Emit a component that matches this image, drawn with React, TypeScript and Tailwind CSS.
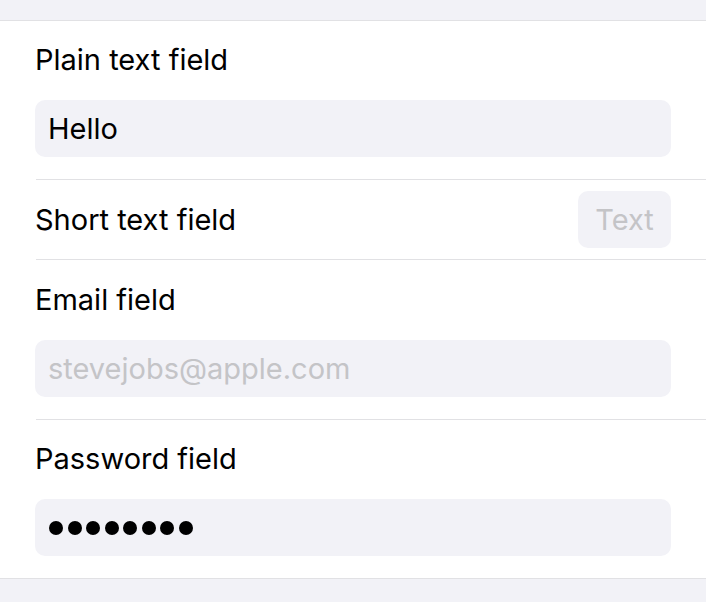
import React from "react";

const font = { fontFamily: "Inter, 'Noto Sans', sans-serif" };

function Field({ children, muted }: { children: React.ReactNode; muted?: boolean }) {
  return (
    <div
      className={`h-[57px] rounded-[10px] bg-[#f2f2f7] px-[13px] flex items-center text-[29px] leading-none ${
        muted ? "text-[#c4c4c7]" : "text-black"
      }`}
    >
      {children}
    </div>
  );
}

function StackRow({
  label,
  children,
  top = "pt-[19px]",
  last,
}: {
  label: string;
  children: React.ReactNode;
  top?: string;
  last?: boolean;
}) {
  return (
    <div className={`ml-[36px] pr-[35px] ${top} pb-[22px] ${last ? "" : "border-b border-[#e1e1e4]"}`}>
      <div className="-ml-px h-[40px] leading-[40px] text-[29px] text-black">{label}</div>
      <div className="mt-[20px] -ml-px">{children}</div>
    </div>
  );
}

export default function App() {
  return (
    <div className="w-[706px] h-[602px] bg-[#f2f2f7] overflow-hidden" style={font}>
      <div className="h-[21px] border-b border-[#e1e1e4]" />
      <div className="bg-white border-b border-[#e1e1e4]">
        <StackRow label="Plain text field">
          <Field>Hello</Field>
        </StackRow>
        <div className="ml-[36px] pr-[35px] h-[80px] flex items-center justify-between border-b border-[#e1e1e4]">
          <span className="-ml-px text-[29px] text-black">Short text field</span>
          <div className="w-[93px] h-[57px] rounded-[10px] bg-[#f2f2f7] flex items-center justify-center text-[29px] text-[#c4c4c7]">
            Text
          </div>
        </div>
        <StackRow label="Email field" top="pt-[20px]">
          <Field muted>stevejobs@apple.com</Field>
        </StackRow>
        <StackRow label="Password field" last>
          <Field>
            <div className="flex gap-[4.5px] pl-px">
              {Array.from({ length: 8 }).map((_, i) => (
                <span key={i} className="w-[14px] h-[14px] rounded-full bg-black" />
              ))}
            </div>
          </Field>
        </StackRow>
      </div>
    </div>
  );
}
